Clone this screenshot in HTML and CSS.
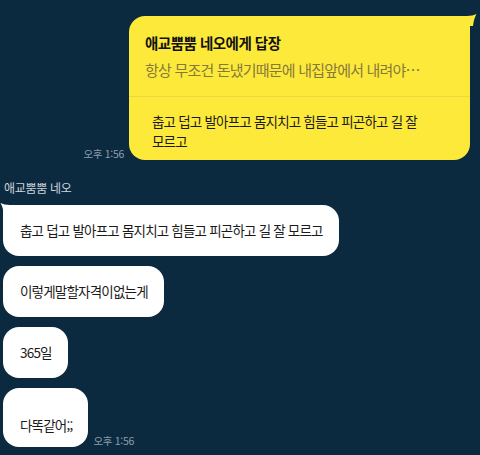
FILE: index.html
```html
<!DOCTYPE html>
<html lang="ko">
  <head>
    <meta charset="UTF-8" />
    <meta name="viewport" content="width=device-width, initial-scale=1.0" />
    <title>채팅</title>
    <link rel="stylesheet" href="styles.css">
  </head>
  <body>
    <div class="chat">
      <div class="row row-me">
        <span class="time">오후 1:56</span>
        <div class="bubble bubble-me">
          <svg class="tail tail-right" width="10" height="12" viewBox="0 0 10 12">
            <path d="M0 2 Q6 2 9.5 0 Q7 4 6 12 L0 12 Z" fill="#fde93a" />
          </svg>
          <div class="reply">
            <div class="reply-title">애교뿜뿜 네오에게 답장</div>
            <div class="reply-quote">항상 무조건 돈냈기때문에 내집앞에서 내려야…</div>
          </div>
          <div class="bubble-text">춥고 덥고 발아프고 몸지치고 힘들고 피곤하고 길 잘<br>모르고</div>
        </div>
      </div>

      <div class="sender">애교뿜뿜 네오</div>
      <div class="group">
        <div class="bubble bubble-you">
          <svg class="tail tail-left" width="10" height="12" viewBox="0 0 10 12">
            <path d="M10 2 Q4 2 0.5 0 Q3 4 4 12 L10 12 Z" fill="#ffffff" />
          </svg>
          춥고 덥고 발아프고 몸지치고 힘들고 피곤하고 길 잘 모르고
        </div>
        <div class="bubble bubble-you">이렇게말할자격이없는게</div>
        <div class="bubble bubble-you">365일</div>
        <div class="row">
          <div class="bubble bubble-you bubble-tall">다똑같어;;</div>
          <span class="time">오후 1:56</span>
        </div>
      </div>
    </div>
  </body>
</html>
```

FILE: styles.css
```css
* {
  margin: 0;
  padding: 0;
  box-sizing: border-box;
}

body {
  font-family: "Noto Sans CJK KR", "Noto Sans", sans-serif;
  background: #0c2a3f;
  color: #1a1a1a;
  width: 480px;
  height: 455px;
  overflow: hidden;
}

.chat {
  display: flex;
  flex-direction: column;
  padding: 16px 10px 0 3px;
}

.row {
  display: flex;
  align-items: flex-end;
  gap: 5px;
}

.row-me {
  justify-content: flex-end;
}

.time {
  font-size: 10.5px;
  letter-spacing: -0.3px;
  color: #8d9eac;
  line-height: 14px;
  margin-bottom: -1px;
}

.bubble {
  position: relative;
  font-size: 13.5px;
  letter-spacing: -0.8px;
  line-height: 20px;
}

.bubble-me {
  width: 341px;
  background: #fde93a;
  border-radius: 16px;
  border-top-right-radius: 0;
}

.tail {
  position: absolute;
  top: -2px;
}

.tail-right {
  right: -7px;
}

.tail-left {
  left: -3px;
}

.reply {
  padding: 16px 16px 12px;
  border-bottom: 1px solid #ecd83a;
}

.reply-title {
  font-size: 14.5px;
  font-weight: 700;
  letter-spacing: -0.5px;
  line-height: 22px;
  color: #111111;
}

.reply-quote {
  margin-top: 2px;
  font-size: 15px;
  line-height: 28px;
  color: #857a3a;
  white-space: nowrap;
  overflow: hidden;
}

.bubble-text {
  padding: 14px 20px 9px 23px;
}

.sender {
  margin-top: 19px;
  font-size: 12px;
  letter-spacing: -0.3px;
  line-height: 18px;
  color: #cdd5dc;
  padding-left: 1px;
}

.group {
  display: flex;
  flex-direction: column;
  align-items: flex-start;
  gap: 10px;
  margin-top: 8px;
}

.bubble-you {
  background: #ffffff;
  border-radius: 16px;
  padding: 15px 16px 16px 17px;
}

.group > .bubble-you:first-child {
  border-top-left-radius: 0;
}

.bubble-tall {
  padding-top: 27px;
  padding-bottom: 12px;
}
```
